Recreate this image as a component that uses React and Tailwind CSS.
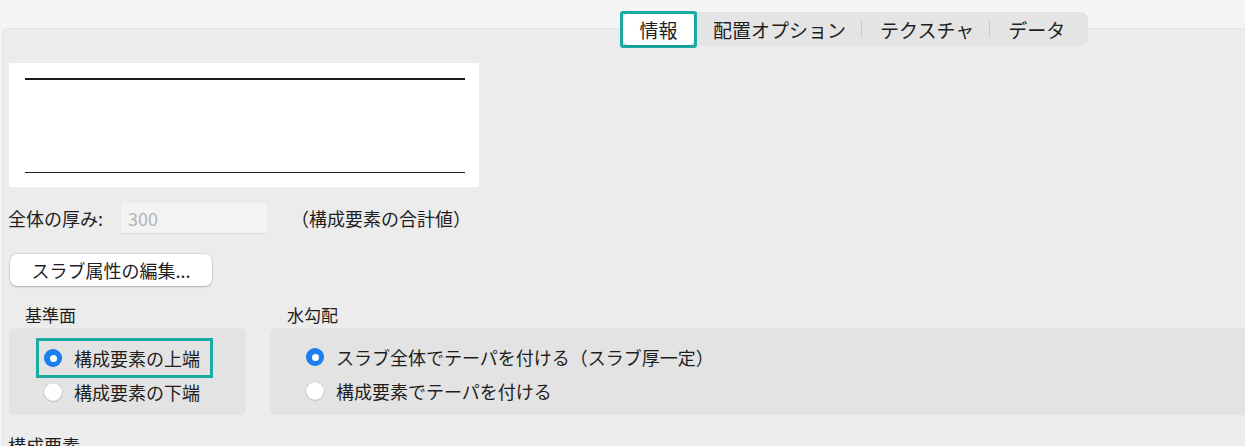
import React from "react";

const font = { fontFamily: '"Noto Sans CJK JP", "Noto Sans", sans-serif' };

function Radio({ checked }) {
  return checked ? (
    <span className="flex h-[18px] w-[18px] shrink-0 items-center justify-center rounded-full bg-[#1b7ff2] shadow-[inset_0_0_0_1px_rgba(0,0,0,0.06)]">
      <span className="h-[7px] w-[7px] rounded-full bg-white" />
    </span>
  ) : (
    <span className="h-[18px] w-[18px] shrink-0 rounded-full bg-white shadow-[0_0_0_0.5px_rgba(0,0,0,0.12),0_0.5px_1.5px_rgba(0,0,0,0.18)]" />
  );
}

export default function App() {
  return (
    <div
      className="relative h-[446px] w-[1245px] overflow-hidden bg-[#f5f5f5] text-[#1e1e1e] antialiased"
      style={font}
    >
      {/* Tab bar */}
      <div className="relative z-10 ml-[620px] mt-[12px] flex h-[34px] w-[468px] items-center rounded-[7px] bg-[#e4e4e4] text-[19px] leading-none">
        <div className="-my-[1px] flex h-[37px] w-[77px] shrink-0 items-center justify-center rounded-[3px] border-[3px] border-[#1aaba1]">
          <div className="flex h-full w-full items-center justify-center rounded-[5px] bg-white shadow-[0_1px_2px_rgba(0,0,0,0.15)]">
            情報
          </div>
        </div>
        <div className="pl-[16px] pr-[15px]">配置オプション</div>
        <div className="h-[18px] w-px bg-[#cacaca]" />
        <div className="pl-[18px] pr-[15px]">テクスチャ</div>
        <div className="h-[18px] w-px bg-[#cacaca]" />
        <div className="pl-[18px]">データ</div>
      </div>

      {/* Panel */}
      <div className="-mt-[18px] ml-[2px] h-[420px] rounded-tl-[6px] border-l border-t border-[#e3e3e3] bg-[#ececec] px-[6px] pt-[34px]">
        {/* Preview */}
        <div className="h-[124px] w-[470px] bg-white pt-[15px]">
          <div className="ml-[16px] mr-[14px] h-[1.5px] bg-[#1c1c1c]" />
          <div className="ml-[16px] mr-[14px] mt-[92px] h-[1.5px] bg-[#1c1c1c]" />
        </div>

        {/* Thickness row */}
        <div className="mt-[16px] flex h-[30px] items-center text-[18px]">
          <span className="-ml-px w-[113px]">全体の厚み:</span>
          <div className="flex h-[30px] w-[146px] items-center rounded-[2px] bg-[#f3f3f3] pl-[7px] text-[18px] text-[#b3b3b3] shadow-[0_1px_1px_rgba(0,0,0,0.08)]">
            300
          </div>
          <span className="ml-[24px]">（構成要素の合計値）</span>
        </div>

        {/* Button */}
        <button className="ml-px mt-[21px] flex h-[32px] w-[202px] items-center justify-center rounded-[7px] bg-white text-[18px] leading-none text-[#1e1e1e] shadow-[0_0_0_0.5px_rgba(0,0,0,0.15),0_1px_2px_rgba(0,0,0,0.2)]">
          スラブ属性の編集...
        </button>

        {/* Groups */}
        <div className="mt-[20px] flex gap-[24px] text-[17px] leading-none">
          <div className="w-[237px] shrink-0">
            <div className="ml-[16px] h-[22px]">基準面</div>
            <div className="h-[87px] rounded-[6px] bg-[#e3e3e3] pl-[27px] pt-[10px] text-[18px]">
              <div className="flex h-[40px] w-[177px] items-center gap-[12px] border-[3px] border-[#1aaba1] pl-[5px]">
                <Radio checked />
                <span>構成要素の上端</span>
              </div>
              <div className="flex h-[28px] items-center gap-[12px] pl-[8px]">
                <Radio />
                <span>構成要素の下端</span>
              </div>
            </div>
          </div>
          <div className="min-w-0 flex-1">
            <div className="ml-[17px] h-[22px]">水勾配</div>
            <div className="h-[87px] w-[1000px] rounded-[6px] bg-[#e3e3e3] pl-[36px] pt-[12px] text-[18px]">
              <div className="flex h-[34px] items-center gap-[12px]">
                <Radio checked />
                <span>スラブ全体でテーパを付ける（スラブ厚一定）</span>
              </div>
              <div className="flex h-[34px] items-center gap-[12px]">
                <Radio />
                <span>構成要素でテーパを付ける</span>
              </div>
            </div>
          </div>
        </div>

        <div className="-ml-px mt-[21px] text-[18px] leading-none">構成要素</div>
      </div>
    </div>
  );
}
